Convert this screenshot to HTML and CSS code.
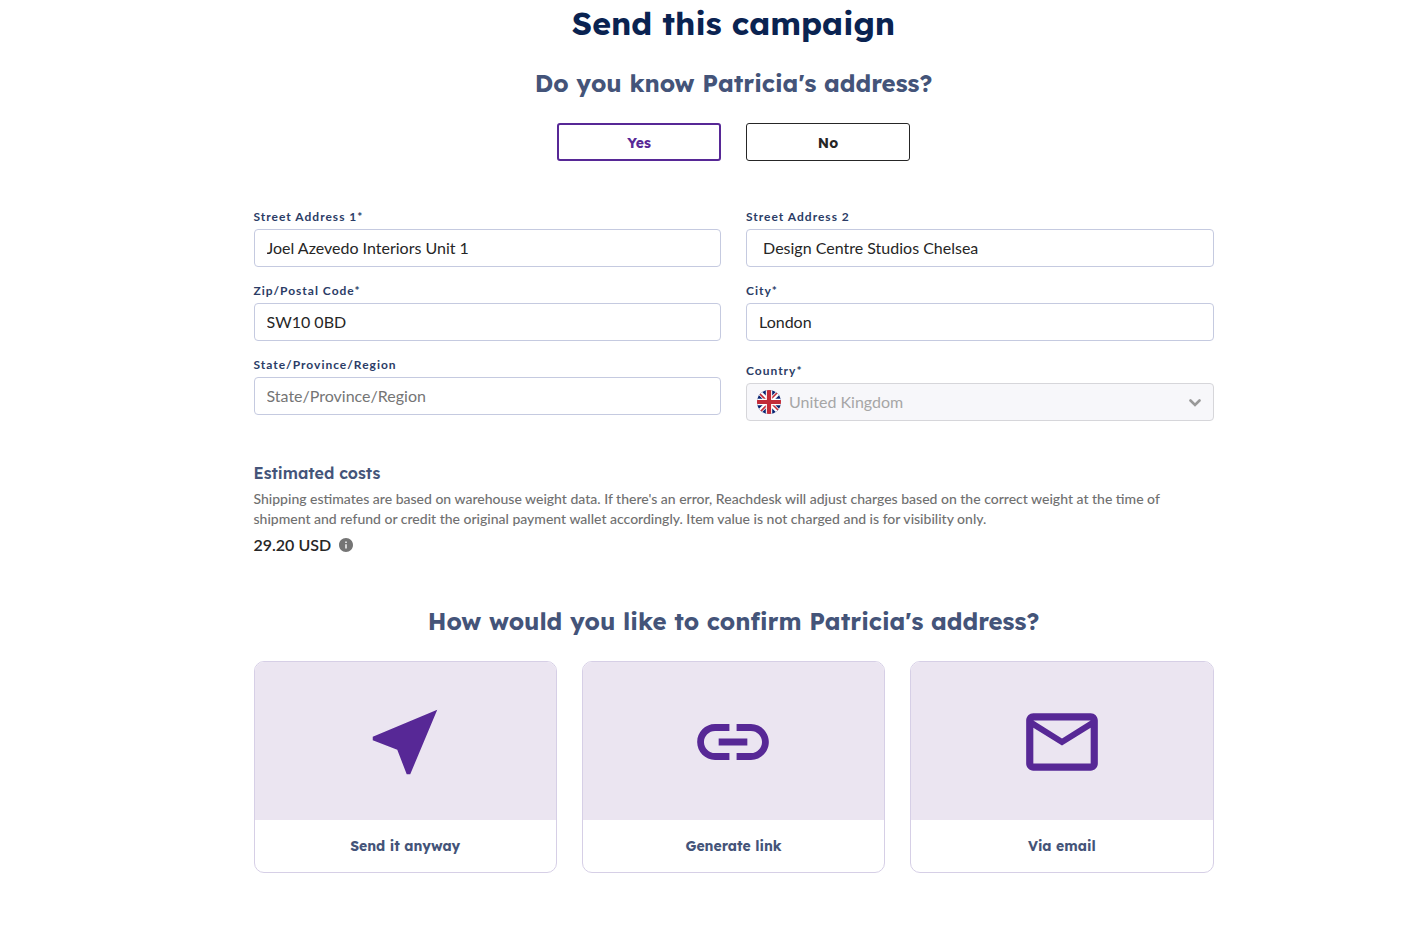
FILE: index.html
```html
<!DOCTYPE html>
<html lang="en">
<head>
<meta charset="utf-8">
<meta name="viewport" content="width=device-width, initial-scale=1">
<title>Send this campaign</title>
<link rel="stylesheet" href="styles.css">
</head>
<body>
<main class="page">
  <h1 class="title">Send this campaign</h1>
  <h2 class="question">Do you know Patricia's address?</h2>
  <div class="choices">
    <button type="button" class="choice choice-selected" aria-pressed="true">Yes</button>
    <button type="button" class="choice" aria-pressed="false">No</button>
  </div>

  <form class="address">
    <div class="field">
      <label class="label" for="street1">Street Address 1*</label>
      <input class="input" id="street1" type="text" value="Joel Azevedo Interiors Unit 1">
    </div>
    <div class="field">
      <label class="label" for="street2">Street Address 2</label>
      <input class="input" id="street2" type="text" value=" Design Centre Studios Chelsea">
    </div>
    <div class="field">
      <label class="label" for="zip">Zip/Postal Code*</label>
      <input class="input" id="zip" type="text" value="SW10 0BD">
    </div>
    <div class="field">
      <label class="label" for="city">City*</label>
      <input class="input" id="city" type="text" value="London">
    </div>
    <div class="field">
      <label class="label" for="state">State/Province/Region</label>
      <input class="input" id="state" type="text" placeholder="State/Province/Region">
    </div>
    <div class="field field-country">
      <label class="label" for="country">Country*</label>
      <div class="select-wrap">
        <select class="input select" id="country" disabled>
          <option selected>United Kingdom</option>
        </select>
        <svg class="flag" viewBox="0 0 24 24" aria-hidden="true">
          <clipPath id="disc"><circle cx="12" cy="12" r="12"/></clipPath>
          <g clip-path="url(#disc)">
            <path fill="#0a2472" d="M0 0h24v24H0z"/>
            <path stroke="#fff" stroke-width="4.6" d="M0 0l24 24M24 0L0 24"/>
            <path stroke="#c22b38" stroke-width="1.6" d="M1 2l9 9M22 1l-9 9M2 23l9-9M23 22l-9-9"/>
            <path stroke="#fff" stroke-width="6.400" d="M12 0v24M0 12h24"/>
            <path stroke="#c22b38" stroke-width="4.200" d="M12 0v24M0 12h24"/>
          </g>
        </svg>
        <svg class="chevron" viewBox="0 0 12 8" aria-hidden="true"><path d="M1.5 1.5L6 6l4.500-4.500" fill="none" stroke="#999" stroke-width="2.600" stroke-linecap="round"/></svg>
      </div>
    </div>
  </form>

  <section class="costs">
    <h3 class="costs-title">Estimated costs</h3>
    <p class="costs-note">Shipping estimates are based on warehouse weight data. If there's an error, Reachdesk will adjust charges based on the correct weight at the time of shipment and refund or credit the original payment wallet accordingly. Item value is not charged and is for visibility only.</p>
    <p class="costs-total">29.20 USD
      <svg class="info" viewBox="2 2 20 20" aria-hidden="true"><path fill="#757575" d="M12 2C6.480 2 2 6.480 2 12s4.480 10 10 10 10-4.480 10-10S17.520 2 12 2zm1 15h-2v-6h2v6zm0-8h-2V7h2v2z"/></svg>
    </p>
  </section>

  <h2 class="question">How would you like to confirm Patricia's address?</h2>
  <div class="cards">
    <button type="button" class="card">
      <span class="card-art"><svg class="card-icon" viewBox="0 0 24 24" aria-hidden="true"><path d="M21 3L3 10.530v.98l6.840 2.650L12.480 21h.98L21 3z"/></svg></span>
      <span class="card-label">Send it anyway</span>
    </button>
    <button type="button" class="card">
      <span class="card-art"><svg class="card-icon" viewBox="0 0 24 24" aria-hidden="true"><path d="M3.900 12c0-1.710 1.390-3.100 3.100-3.100h4V7H7c-2.760 0-5 2.240-5 5s2.240 5 5 5h4v-1.900H7c-1.710 0-3.100-1.390-3.100-3.100zM8 13h8v-2H8v2zm9-6h-4v1.900h4c1.710 0 3.100 1.390 3.100 3.100s-1.390 3.100-3.100 3.100h-4V17h4c2.760 0 5-2.240 5-5s-2.240-5-5-5z"/></svg></span>
      <span class="card-label">Generate link</span>
    </button>
    <button type="button" class="card">
      <span class="card-art"><svg class="card-icon" viewBox="0 0 24 24" aria-hidden="true"><path d="M22 6c0-1.100-.9-2-2-2H4c-1.100 0-2 .9-2 2v12c0 1.100.9 2 2 2h16c1.100 0 2-.9 2-2V6zm-2 0l-8 5-8-5h16zm0 12H4V8l8 5 8-5v10z"/></svg></span>
      <span class="card-label">Via email</span>
    </button>
  </div>
</main>
</body>
</html>
```
FILE: styles.css
```css
* { box-sizing: border-box; }
body {
  margin: 0;
  padding-left: 41px;
  background: #fff;
  color: #262626;
  font: 16px/20px Lato, sans-serif;
}
h1, h2, h3, p { margin: 0; }
button, input, select { font: inherit; color: inherit; }
.page { max-width: 960px; margin: 0 auto; }

.title, .question, .choice, .costs-title, .card-label {
  font-family: Lexend, Inter, sans-serif;
}
.title {
  color: #0a2351;
  font-size: 32px;
  line-height: 46px;
  font-weight: 700;
  text-align: center;
}
.question {
  padding: 19px 0 22px;
  color: #445479;
  font-size: 24px;
  line-height: 36px;
  font-weight: 700;
  text-align: center;
}
.choices { display: flex; justify-content: center; gap: 25px; }
.choice {
  width: 164px;
  height: 38px;
  padding: 2px 0 0;
  border: 1px solid #262626;
  border-radius: 3px;
  background: #fff;
  font-size: 14px;
  font-weight: 700;
  cursor: pointer;
}
.choice-selected { border: 2px solid #572896; color: #572896; }

.address {
  display: grid;
  grid-template-columns: 1fr 1fr;
  gap: 16px 25px;
  padding-top: 48px;
}
.label {
  display: block;
  padding-bottom: 4px;
  color: #2b3c66;
  font-size: 12px;
  line-height: 16px;
  font-weight: 700;
  letter-spacing: 1px;
}
.input {
  display: block;
  width: 100%;
  height: 38px;
  padding: 0 12px 2px;
  border: 1px solid #c5cae0;
  border-radius: 4px;
  background: #fff;
}
.input::placeholder { color: #757575; opacity: 1; }
.field-country { padding-top: 6px; }
.select-wrap { position: relative; }
.select {
  padding: 0 0 0 42px;
  appearance: none;
  border-color: #d6d6da;
  background: #f7f7fa;
  color: #a6a6a6;
  opacity: 1;
}
.flag { position: absolute; left: 11px; top: 7px; width: 24px; height: 24px; }
.chevron { position: absolute; right: 13px; top: 16px; width: 12px; height: 8px; }

.costs { padding: 42px 0 29px; }
.costs-title {
  color: #445479;
  font-size: 16px;
  line-height: 20px;
  font-weight: 600;
}
.costs-note { padding: 6px 0; color: #707070; font-size: 14px; font-weight: 500; }
.costs-total { display: flex; align-items: center; gap: 8px; font-weight: 600; }
.info { width: 14px; height: 14px; }

.cards { display: grid; grid-template-columns: repeat(3, 1fr); gap: 25px; }
.card {
  display: flex;
  flex-direction: column;
  padding: 0;
  overflow: hidden;
  border: 1px solid #d6cfe6;
  border-radius: 10px;
  background: #fff;
  cursor: pointer;
}
.card-art {
  display: flex;
  align-items: center;
  justify-content: center;
  align-self: stretch;
  height: 158px;
  padding-top: 2px;
  background: #ebe5f1;
}
.card-icon { width: 86px; height: 86px; fill: #572896; }
.card-label {
  align-self: stretch;
  padding: 16px 0;
  color: #445479;
  font-size: 14px;
  line-height: 20px;
  font-weight: 700;
}
```
